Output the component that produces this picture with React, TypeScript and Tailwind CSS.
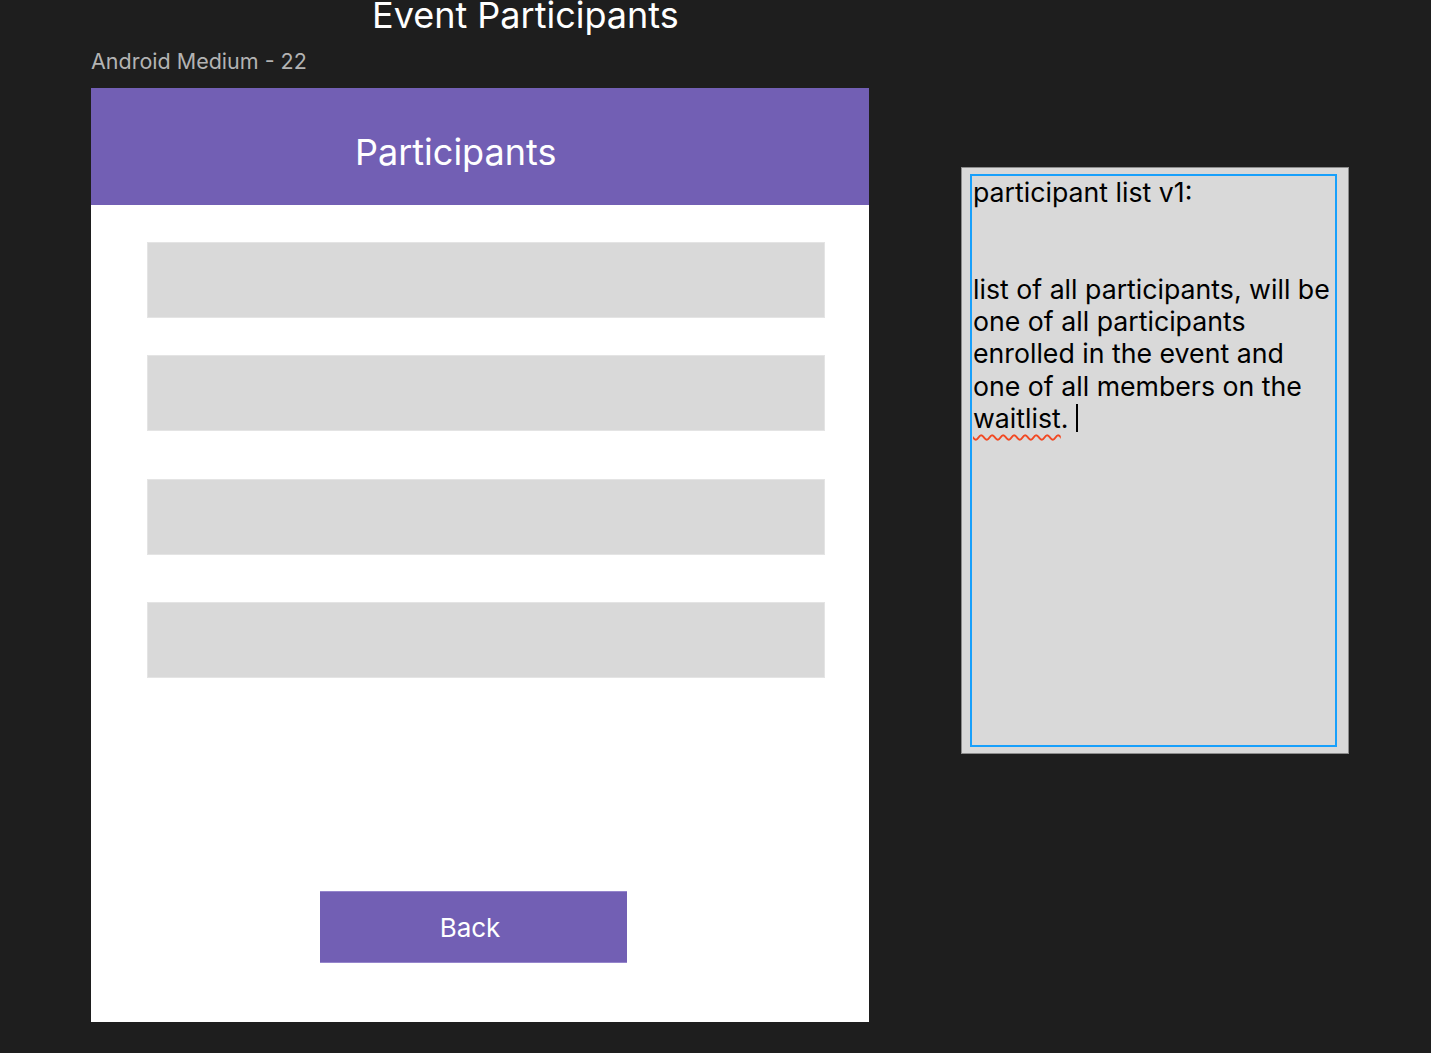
export default function App() {
  const rows = ['mt-[37px]', 'mt-[37px]', 'mt-[48px]', 'mt-[47px]']

  return (
    <div
      className="flex w-[1431px] h-[1053px] overflow-hidden bg-[#1e1e1e]"
      style={{ fontFamily: 'Inter, "Noto Sans", sans-serif' }}
    >
      {/* left: frame title, label and the phone frame */}
      <div className="flex flex-col pl-[91px]">
        <h1 className="mt-[-3px] ml-[281px] text-[36px] leading-[36px] text-white whitespace-nowrap">
          Event Participants
        </h1>
        <p className="mt-[16px] text-[21.5px] leading-[24px] text-[#b3b3b3] whitespace-nowrap">
          Android Medium - 22
        </p>

        <div className="mt-[15px] flex flex-col w-[778px] h-[934px] bg-white">
          <div className="h-[117px] bg-[#725fb4] pt-[46px] pl-[264px]">
            <span className="block text-[36px] leading-[36px] text-white whitespace-nowrap">
              Participants
            </span>
          </div>

          {rows.map((mt, i) => (
            <div
              key={i}
              className={`${mt} ml-[56px] w-[678px] h-[76px] bg-[#d9d9d9] border border-[#e4e4e4]`}
            />
          ))}

          <button className="mt-[213px] ml-[229px] w-[307px] h-[72px] pr-[7px] bg-[#725fb4] text-white text-[26px] border-t border-b border-[#9585cc]">
            Back
          </button>
        </div>
      </div>

      {/* right: sticky note with text being edited */}
      <div className="ml-[92px] mt-[167px] w-[388px] h-[587px] bg-[#d9d9d9] border border-[#8c8c8c] pt-[6px] pl-[8px]">
        <div className="w-[367px] h-[573px] border-2 border-[#18a0fb] pl-px text-[26.7px] leading-[32.3px] text-black">
          <div className="whitespace-nowrap">participant list v1:</div>
          <div className="h-[64.6px]" />
          <div className="whitespace-nowrap">list of all participants, will be</div>
          <div className="whitespace-nowrap">one of all participants</div>
          <div className="whitespace-nowrap">enrolled in the event and</div>
          <div className="whitespace-nowrap">one of all members on the</div>
          <div className="whitespace-nowrap flex items-center">
            <span className="underline decoration-wavy decoration-[#f24822] decoration-[1.5px] underline-offset-[6px]">
              waitlist
            </span>
            <span>.</span>
            <span className="ml-[8px] inline-block w-[2px] h-[28px] bg-black" />
          </div>
        </div>
      </div>
    </div>
  )
}
